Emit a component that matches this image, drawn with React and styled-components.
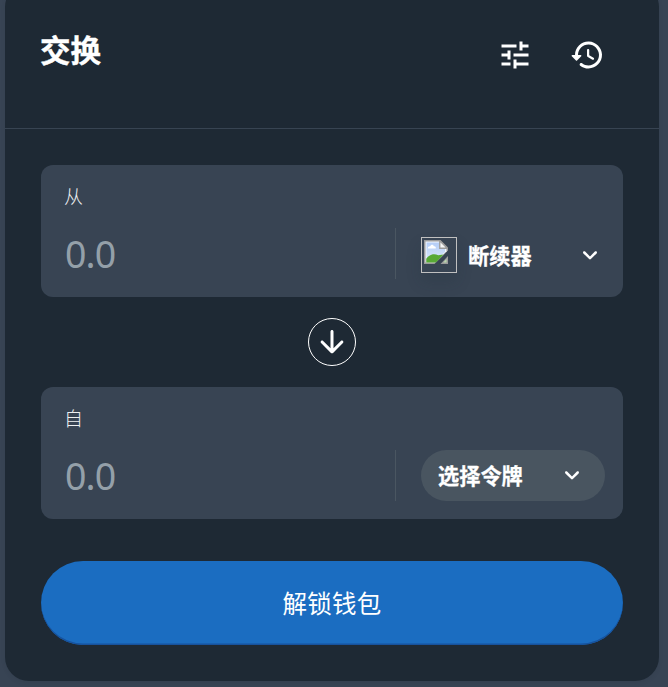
import React from "react";
import styled, { createGlobalStyle } from "styled-components";

const GlobalStyle = createGlobalStyle`
  *, *::before, *::after { box-sizing: border-box; }
  html, body { margin: 0; height: 100%; overflow: hidden; }
  body {
    background: #384454;
    color: #fff;
    font-family: "Noto Sans", "Noto Sans CJK SC", sans-serif;
  }
  button, input { font: inherit; color: inherit; border: 0; padding: 0; background: none; }
`;

const Page = styled.main`
  height: 687px;
  overflow: hidden;
  display: flex;
  align-items: flex-end;
  padding: 0 9px 6px 5px;
`;

const Card = styled.section`
  flex: 1;
  height: 698px;
  border-radius: 24px;
  background: #1e2934;
  box-shadow: 0 2px 4px rgba(30, 42, 53, 0.12);
`;

const Header = styled.header`
  display: flex;
  justify-content: space-between;
  height: 146px;
  padding: 54px 54px 0 36px;
  border-bottom: 1px solid #384452;
`;

const Title = styled.h1`
  margin: -10px 0 0 -1px;
  font: 700 30.5px/44px "Noto Sans CJK SC", sans-serif;
  -webkit-text-stroke: 0.4px #fff;
`;

const Actions = styled.div`
  display: flex;
  gap: 36px;
`;

const IconButton = styled.button`
  display: flex;
  width: 36px;
  height: 36px;
`;

const Icon = styled.svg`
  display: block;
  flex: none;
  width: ${(p) => p.$size}px;
  height: ${(p) => p.$size}px;
  fill: #fff;
`;

const Body = styled.div`
  padding: 36px;
  display: flex;
  flex-direction: column;
`;

const Panel = styled.div`
  height: 132px;
  border-radius: 12px;
  background: #384453;
  padding: 17px 18px 0 24px;
`;

const Label = styled.label`
  display: block;
  height: 46px;
  margin-left: -1px;
  font: 300 19px/28px "Noto Sans CJK SC", sans-serif;
  color: #eef0f2;
`;

const Fields = styled.div`
  display: flex;
  align-items: center;
  height: 51px;
`;

const Amount = styled.input`
  width: 331px;
  height: 51px;
  margin-right: -1px;
  font: 400 37.5px/51px "Noto Sans", sans-serif;
  letter-spacing: -0.9px;
  outline: none;
  border-right: 1px solid #4a5661;
  &::placeholder { color: #94a0a9; opacity: 1; }
`;

const TokenButton = styled.button`
  display: flex;
  align-items: center;
  justify-content: space-between;
  width: 184px;
  height: 51px;
  margin-left: 26px;
  padding: ${(p) => (p.$filled ? "0 18px 2px 17px" : "2px 0 0")};
  border-radius: 26px;
  background: ${(p) => (p.$filled ? "#495560" : "transparent")};
`;

const TokenName = styled.span`
  display: flex;
  align-items: center;
  gap: 11px;
  font: 700 21.2px/31px "Noto Sans CJK SC", sans-serif;
  -webkit-text-stroke: 0.3px #fff;
`;

const MissingImage = styled.span`
  width: 36px;
  height: 36px;
  padding: 2px;
  border: 1px solid #c0c0c0;
  box-shadow: 0 9px 15px rgba(30, 42, 53, 0.18);
`;

const SwitchRow = styled.div`
  display: flex;
  align-items: center;
  justify-content: center;
  height: 90px;
`;

const SwitchButton = styled.button`
  display: flex;
  align-items: center;
  justify-content: center;
  width: 48px;
  height: 48px;
  border: 1px solid #fff;
  border-radius: 50%;
`;

const UnlockButton = styled.button`
  height: 84px;
  margin-top: 42px;
  border-radius: 42px;
  background: #1b6dc1;
  box-shadow: inset 0 -1.5px 0 #17529d;
  font: 400 24.5px/36px "Noto Sans CJK SC", sans-serif;
  letter-spacing: 0.3px;
`;

const TuneIcon = () => (
  <Icon $size={36} viewBox="0 0 24 24">
    <path d="M3 17v2h6v-2H3zM3 5v2h10V5H3zm10 16v-2h8v-2h-8v-2h-2v6h2zM7 9v2H3v2h4v2h2V9H7zm14 4v-2H11v2h10zm-6-4h2V7h4V5h-4V3h-2v6z" />
  </Icon>
);

const HistoryIcon = () => (
  <Icon $size={36} viewBox="0 0 24 24">
    <path d="M13.26 3C8.17 2.86 4 6.95 4 12H2.21C1.76 12 1.54 12.54 1.86 12.85L4.65 15.65C4.85 15.85 5.16 15.85 5.36 15.65L8.15 12.85C8.46 12.54 8.24 12 7.79 12H6C6 8.1 9.18 4.95 13.1 5C16.82 5.05 19.95 8.18 20 11.9C20.05 15.81 16.9 19 13 19C11.39 19 9.9 18.45 8.72 17.52C8.32 17.21 7.76 17.24 7.4 17.6C6.98 18.02 7.01 18.73 7.48 19.09C9 20.29 10.91 21 13 21C18.05 21 22.14 16.83 22 11.74C21.87 7.05 17.95 3.13 13.26 3ZM12.75 8C12.34 8 12 8.34 12 8.75V12.43C12 12.78 12.19 13.11 12.49 13.29L15.61 15.14C15.97 15.35 16.43 15.23 16.64 14.88C16.85 14.52 16.73 14.06 16.38 13.85L13.5 12.14V8.74C13.5 8.34 13.16 8 12.75 8Z" />
  </Icon>
);

const ArrowDownIcon = () => (
  <Icon $size={36} viewBox="0 0 24 24">
    <path d="M11 5V16.17L6.12 11.29C5.73 10.9 5.09 10.9 4.7 11.29C4.31 11.68 4.31 12.31 4.7 12.7L11.29 19.29C11.68 19.68 12.31 19.68 12.7 19.29L19.29 12.7C19.68 12.31 19.68 11.68 19.29 11.29C18.9 10.9 18.27 10.9 17.88 11.29L13 16.17V5C13 4.45 12.55 4 12 4C11.45 4 11 4.45 11 5Z" />
  </Icon>
);

const ChevronIcon = () => (
  <Icon $size={30} viewBox="0 0 24 24">
    <path d="M8.12 9.29L12 13.17L15.88 9.29C16.27 8.9 16.9 8.9 17.29 9.29C17.68 9.68 17.68 10.31 17.29 10.7L12.7 15.29C12.31 15.68 11.68 15.68 11.29 15.29L6.7 10.7C6.31 10.31 6.31 9.68 6.7 9.29C7.09 8.91 7.73 8.9 8.12 9.29Z" />
  </Icon>
);

const BrokenImageIcon = () => (
  <Icon $size={24} viewBox="0 0 16 16">
    <defs>
      <linearGradient id="sky" x1="0" y1="0" x2="0" y2="1">
        <stop offset="0" stopColor="#b4cdf6" />
        <stop offset="1" stopColor="#dce8fb" />
      </linearGradient>
    </defs>
    <path d="M0 0H11L16 5V7L9 16H0Z" fill="#9b9b9b" />
    <path d="M1 1H10.5L15 5.5V7.5L7.5 15H1Z" fill="#f4f7fd" />
    <path d="M1.7 1.7H10V6H14V8L7 14.3H1.7Z" fill="url(#sky)" />
    <path d="M2.5 5.6C2.4 4.5 3.7 4 4.2 4.2C4.7 2.6 6.4 3 6.6 4.2C7.7 4 8.1 5 7.8 5.6Z" fill="#fff" />
    <path d="M1.5 15V12.5C3.5 9.7 6.5 8.8 9.5 10.2L13 9.6L8 15Z" fill="#58a935" />
    <path d="M10.5 0.5L15.5 5.5H10.5Z" fill="#f6f6f6" stroke="#9b9b9b" strokeWidth=".9" />
    <path d="M16 7.2V9.4L10 16H7Z" fill="#384453" />
    <path d="M16 10.6V16H11Z" fill="#9b9b9b" />
    <path d="M15 12.6V15H12.8Z" fill="#b9d9ad" />
  </Icon>
);

function AmountPanel({ label, children }) {
  return (
    <Panel>
      <Label>{label}</Label>
      <Fields>
        <Amount placeholder="0.0" />
        {children}
      </Fields>
    </Panel>
  );
}

export default function App() {
  return (
    <>
      <GlobalStyle />
      <Page>
        <Card>
          <Header>
            <Title>交换</Title>
            <Actions>
              <IconButton><TuneIcon /></IconButton>
              <IconButton><HistoryIcon /></IconButton>
            </Actions>
          </Header>
          <Body>
            <AmountPanel label="从">
              <TokenButton>
                <TokenName>
                  <MissingImage><BrokenImageIcon /></MissingImage>
                  断续器
                </TokenName>
                <ChevronIcon />
              </TokenButton>
            </AmountPanel>
            <SwitchRow>
              <SwitchButton><ArrowDownIcon /></SwitchButton>
            </SwitchRow>
            <AmountPanel label="自">
              <TokenButton $filled>
                <TokenName>选择令牌</TokenName>
                <ChevronIcon />
              </TokenButton>
            </AmountPanel>
            <UnlockButton>解锁钱包</UnlockButton>
          </Body>
        </Card>
      </Page>
    </>
  );
}
